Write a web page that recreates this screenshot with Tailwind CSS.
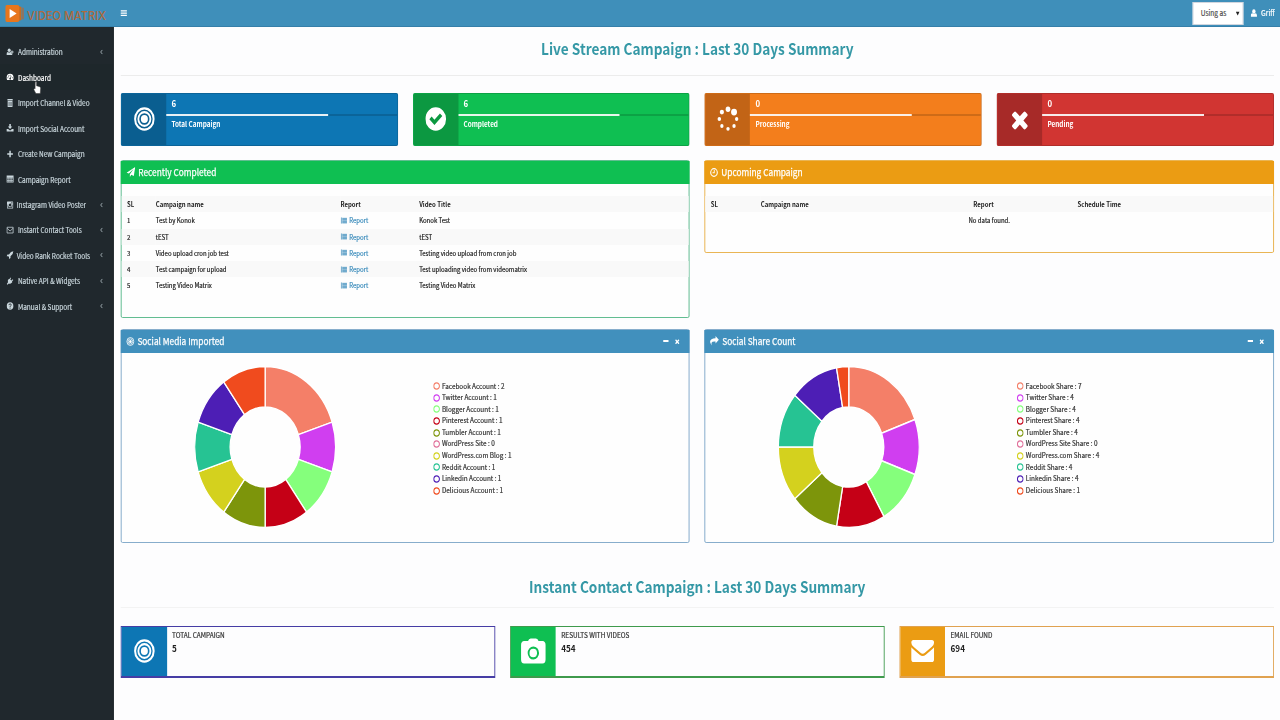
<!DOCTYPE html>
<html lang="en">
<head>
    <meta charset="UTF-8">
    <meta name="viewport" content="width=device-width, initial-scale=1.0">
    <title>Video Matrix | Dashboard</title>
    <script src="https://cdn.jsdelivr.net/npm/@tailwindcss/browser@4"></script>
</head>
<body class="bg-[#fdfdfe] overflow-hidden font-['Noto_Sans_CJK_SC','Noto_Sans',sans-serif] text-[#333]">

<!-- Icons -->
<svg class="hidden">
    <symbol id="i-user-plus" viewBox="0 0 16 16"><circle cx="6" cy="4.5" r="3.5"/><path d="M0 14v-2.500q0-3.500 3-3.500q3 2 6 0q1.200 0 1.800.8v2.200h2.200v3z"/><path d="M11.500 5h2v2.200H16v2h-2.500v2.300h-2V9.200H9.300v-2h2.200z"/></symbol>
    <symbol id="i-dashboard" viewBox="0 0 16 16"><path fill-rule="evenodd" d="M8 1.500a8 8 0 0 1 8 8q0 2.500-1.300 4.500H1.300Q0 12 0 9.500a8 8 0 0 1 8-8zM3 8.500a1.100 1.100 0 1 0 .1 2.200A1.100 1.100 0 0 0 3 8.500zM4.500 4.900a1.100 1.100 0 1 0 .1 2.200 1.100 1.100 0 0 0-.1-2.200zM8 3.300a1.100 1.100 0 1 0 .1 2.200A1.100 1.100 0 0 0 8 3.300zM13 8.500a1.100 1.100 0 1 0 .1 2.200 1.100 1.100 0 0 0-.1-2.200zM10.200 5.500L8.300 9.500a1.800 1.800 0 1 0 1 .4l1.900-4z"/></symbol>
    <symbol id="i-trash" viewBox="0 0 16 16"><path fill-rule="evenodd" d="M2 0h12v3H2zM2.500 4h11v12h-11zM5 6v8h1V6zm2.500 0v8h1V6zM10 6v8h1V6z"/></symbol>
    <symbol id="i-download" viewBox="0 0 16 16"><path d="M6.200 0h3.600v5H13l-5 5-5-5h3.200z"/><path d="M0 10h3.500L8 13l4.500-3H16v5H0z"/></symbol>
    <symbol id="i-plus" viewBox="0 0 16 16"><path d="M6.300 1.500h3.400v4.800h4.800v3.400H9.700v4.800H6.300V9.700H1.500V6.300h4.800z"/></symbol>
    <symbol id="i-table" viewBox="0 0 16 16"><path fill-rule="evenodd" d="M0 1h16v14H0zM1.500 5.500v1.700h3.200V5.500zm4.500 0v1.700h3.500V5.500zm5 0v1.700h3.500V5.500zM1.500 8.400v1.600h3.200V8.400zm4.500 0v1.600h3.500V8.400zm5 0v1.600h3.500V8.400zM1.500 11.500v1.700h3.200v-1.700zm4.500 0v1.700h3.500v-1.700zm5 0v1.700h3.500v-1.700z"/></symbol>
    <symbol id="i-instagram" viewBox="0 0 16 16"><path fill-rule="evenodd" d="M2 1h12q1 0 1 1v12q0 1-1 1H2q-1 0-1-1V2q0-1 1-1zm9 1.500v2.500h2.500V2.500zM2.500 7v6.500h11V7h-1.300a4.300 4.300 0 1 1-8.400 0zM8 5a3 3 0 1 0 .1 6A3 3 0 0 0 8 5z"/></symbol>
    <symbol id="i-envelope-o" viewBox="0 0 16 16"><path d="M1 2.500h14v11.500H1zM1 4.500l7 5.500 7-5.500" fill="none" stroke="currentColor" stroke-width="1.600"/></symbol>
    <symbol id="i-rocket" viewBox="0 0 16 16"><path d="M15.500.5q0 6-6.500 10v3.500l-3.500 2V12L4 10.500H.2L2 7h3.500q4-6.500 10-6.500z"/></symbol>
    <symbol id="i-plug" viewBox="0 0 16 16"><path d="M9 1l1.500 1-2 3 2.500 2 3-2.500 1.300 1.300-3 3 1 1-1.500 1.500q-3 3.500-6.500 1.500L2 15.500.5 14l2.800-3.300Q1.500 7 5 4l1.300-.7.700.8z"/></symbol>
    <symbol id="i-question" viewBox="0 0 16 16"><circle cx="8" cy="8" r="7.500"/><path d="M5.500 6.200q.2-2.500 2.600-2.500t2.500 2.200q0 1.500-1.500 2.200Q8 8.700 8 9.800M8 11.200v2" fill="none" stroke="#20282d" stroke-width="1.900"/></symbol>
    <symbol id="i-angle" viewBox="0 0 16 16"><path d="M10.500 2.500L5.500 8l5 5.500" fill="none" stroke="currentColor" stroke-width="2"/></symbol>
    <symbol id="i-bars" viewBox="0 0 16 16"><path d="M1 2.500h14v2.500H1zm0 4.500h14v2.500H1zm0 4.500h14V14H1z"/></symbol>
    <symbol id="i-user" viewBox="0 0 16 16"><ellipse cx="8" cy="5" rx="3.900" ry="4.700"/><path d="M1 15.500v-3Q1 8.500 4.700 8.500q3.300 2 6.600 0Q15 8.500 15 12.500v3z"/></symbol>
    <symbol id="i-bullseye" viewBox="0 0 24 24"><circle cx="12" cy="12" r="10.600" fill="none" stroke="currentColor" stroke-width="2.300"/><circle cx="12" cy="12" r="6.900" fill="none" stroke="currentColor" stroke-width="2.100"/><circle cx="12" cy="12" r="4"/></symbol>
    <symbol id="i-check" viewBox="0 0 24 24"><path fill-rule="evenodd" d="M12 .2a11.800 11.800 0 1 1 0 23.600A11.800 11.800 0 0 1 12 .2zM4.700 12.200l5.800 5.800 9-9L16.800 6.500l-6.300 6.200-3.200-3.100z"/></symbol>
    <symbol id="i-spinner" viewBox="0 0 26 26"><circle cx="13" cy="3.300" r="2.700"/><circle cx="19.900" cy="6.100" r="3.400"/><circle cx="22.900" cy="13" r="1.900"/><circle cx="19.900" cy="20" r="1.900"/><circle cx="13" cy="22.800" r="1.900"/><circle cx="6" cy="20" r="1.900"/><circle cx="3.100" cy="13" r="2"/><circle cx="6" cy="6.100" r="2.400"/></symbol>
    <symbol id="i-times" viewBox="0 0 1792 1792"><path d="M1490 1322q0 40-28 68l-136 136q-28 28-68 28t-68-28l-294-294-294 294q-28 28-68 28t-68-28l-136-136q-28-28-28-68t28-68l294-294-294-294q-28-28-28-68t28-68l136-136q28-28 68-28t68 28l294 294 294-294q28-28 68-28t68 28l136 136q28 28 28 68t-28 68l-294 294 294 294q28 28 28 68z"/></symbol>
    <symbol id="i-plane" viewBox="0 0 16 16"><path d="M16 0l-2.500 14.500-4.700-2L6.300 16v-4.500L13 3.300 4.500 10.500.3 9z"/></symbol>
    <symbol id="i-clock" viewBox="0 0 16 16"><circle cx="8" cy="8" r="6.700" fill="none" stroke="currentColor" stroke-width="2.200"/><path d="M8.500 3.500v5H5" fill="none" stroke="currentColor" stroke-width="1.800"/></symbol>
    <symbol id="i-share" viewBox="0 0 16 16"><path d="M10 0l6 6-6 6V8.700q-6-.5-7.300 2-.4 1.800.6 4.300Q0 11.500 0 9.300q.5-5.700 10-5.700z"/></symbol>
    <symbol id="i-list" viewBox="0 0 16 16"><path fill-opacity=".55" d="M0 1h3v14H0z"/><path d="M4 2h12v2H4zm0 3.300h12v2H4zm0 3.400h12v2H4zM4 12h12v2H4z" fill-opacity=".85"/><path d="M0 1h16v14H0z" fill-opacity=".25"/></symbol>
    <symbol id="i-camera" viewBox="0 0 28 26"><path fill-rule="evenodd" d="M8 3q.8-2.500 3-2.500h6q2.200 0 3 2.500h4.500Q28 3.300 28 7v14.500q0 4-3.500 4h-21q-3.500 0-3.500-4V7q0-3.700 3.500-4zm6 5.500a6.500 6.500 0 1 0 .1 13 6.500 6.500 0 0 0-.1-13zm0 2.200a4.300 4.300 0 1 1-.1 8.600 4.300 4.300 0 0 1 .1-8.600z"/></symbol>
    <symbol id="i-envelope" viewBox="0 0 26 22"><path d="M2.500 0h21Q26 0 26 2.800q0 2-2.500 4l-8 6q-2.500 1.900-5 0l-8-6Q0 4.800 0 2.800 0 0 2.500 0z"/><path d="M0 7.200q1 1.300 9.500 7.500 3.500 2.500 7 0Q25 8.500 26 7.200v12Q26 22 23.500 22h-21Q0 22 0 19.200z"/></symbol>
</svg>

<!-- The whole UI is laid out at 1463px and squeezed to the 1280px window -->
<div class="w-[1280px] h-[720px] overflow-hidden">
<div class="w-[1462.8px] h-[720px] origin-top-left scale-x-[0.875] flex flex-col relative">

    <!-- Top bar -->
    <header class="h-[27px] shrink-0 bg-[#3f8fba] flex items-center border-b border-[#367fa9]">
        <div class="w-[130px] h-full flex items-center pl-[6px]">
            <svg class="w-[117px] h-[22px]" viewBox="0 0 117 22">
                <path d="M15 4l3.500 1v13L15 19z" fill="#c96c1f"/>
                <path d="M19.500 5.500l1.500.5v11l-1.500.5z" fill="#b5683a"/>
                <rect x="0" y="3" width="16" height="17" rx="2" fill="#e8761c"/>
                <path d="M5 7l8 4.500-8 4.500z" fill="#fff"/>
                <text x="25" y="18" textLength="90" lengthAdjust="spacingAndGlyphs" font-family="Inter, sans-serif" font-size="12" font-weight="500" fill="#b06a3c">VIDEO MATRIX</text>
            </svg>
        </div>
        <svg class="w-[9px] h-[8px] ml-[7px] fill-white"><use href="#i-bars"/></svg>
        <div class="ml-auto flex items-center h-full">
            <div class="w-[58px] h-[23px] bg-white border border-[#d2d6de] flex items-center pl-[8px] text-[7.5px] text-[#444] [-webkit-text-stroke:0.15px]">Using as
                <svg class="w-[5px] h-[5px] ml-auto mr-[3px] fill-[#222]" viewBox="0 0 6 6"><path d="M.5 1h5L3 5.500z"/></svg>
            </div>
            <svg class="w-[8px] h-[8px] ml-[7.500px] fill-white"><use href="#i-user"/></svg>
            <span class="ml-[4.5px] mr-[6px] text-[7.8px] text-white [-webkit-text-stroke:0.2px]">Griff</span>
        </div>
    </header>

    <div class="flex flex-1 min-h-0">
        <!-- Sidebar -->
        <aside class="w-[130px] bg-[#20282d] border-r border-[#1a2226] pt-[12px]">
            <nav id="menu" class="flex flex-col"></nav>
        </aside>

        <!-- Content -->
        <main class="flex-1 pl-[8px] pr-[7px] flex flex-col">
            <h1 class="h-[49px] border-b border-[#ececec] text-center text-[15.6px] leading-[42px] font-bold text-[#3598a6]">Live Stream Campaign : Last 30 Days Summary</h1>

            <section id="stats" class="grid grid-cols-4 gap-[17px] mt-[17px]"></section>

            <div class="grid grid-cols-2 items-start gap-[17px] mt-[14.5px]">
                <section class="h-[158px] border border-[#57b98a] rounded-[2px] bg-[#fefefe]">
                    <h2 class="h-[23px] pb-[1px] -mx-px bg-[#0fbf52] text-white text-[9.5px] flex items-center gap-[3px] pl-[6px] [-webkit-text-stroke:0.25px]"><svg class="w-[11px] h-[10px] fill-white"><use href="#i-plane"/></svg>Recently Completed</h2>
                    <table class="w-full mt-[12px] table-fixed text-[6.88px] leading-[16.25px] text-[#222]">
                        <thead>
                            <tr class="bg-[#f9f9f9] text-left"><th class="w-[39px] pl-[6px]">SL</th><th class="w-[211px]">Campaign name</th><th class="w-[90px]">Report</th><th>Video Title</th></tr>
                        </thead>
                        <tbody id="completed" class="[-webkit-text-stroke:0.2px]"></tbody>
                    </table>
                </section>

                <section class="h-[93px] border border-[#e8b04a] rounded-[2px] bg-[#fefefe]">
                    <h2 class="h-[23px] pb-[1px] -mx-px bg-[#eb9c13] text-white text-[9.5px] flex items-center gap-[3px] pl-[6px] [-webkit-text-stroke:0.25px]"><svg class="w-[10px] h-[9px] fill-white text-white"><use href="#i-clock"/></svg>Upcoming Campaign</h2>
                    <table class="w-full mt-[12px] table-fixed text-[6.88px] leading-[16.25px] text-[#222]">
                        <tr class="bg-[#f9f9f9] text-left"><th class="w-[63px] pl-[6px]">SL</th><th class="w-[243px]">Campaign name</th><th class="w-[119px]">Report</th><th>Schedule Time</th></tr>
                        <tr><td colspan="4" class="text-center [-webkit-text-stroke:0.2px]">No data found.</td></tr>
                    </table>
                </section>
            </div>

            <div class="grid grid-cols-2 gap-[17px] mt-[11px]">
                <section class="h-[214px] border border-[#7fa8c9] rounded-[2px] bg-[#fefefe]">
                    <h2 class="h-[23px] pb-[1px] -mx-px bg-[#4190bd] text-white text-[9.5px] flex items-center gap-[3px] pl-[6px] pr-[10px] [-webkit-text-stroke:0.25px]"><svg class="w-[10px] h-[9px] fill-white text-white"><use href="#i-bullseye"/></svg>Social Media Imported
                        <span class="ml-auto w-[6px] h-[1.5px] bg-white"></span><svg class="w-[8px] h-[7px] ml-[3px] fill-white"><use href="#i-times"/></svg>
                    </h2>
                    <div class="flex pt-[12.5px] pl-[82.5px]">
                        <svg id="chart-account" class="w-[162px] h-[162px]" viewBox="-81 -81 162 162"></svg>
                        <ul id="legend-account" class="ml-[111px] mt-[15px] text-[7.32px] leading-[11.6px] [-webkit-text-stroke:0.2px]"></ul>
                    </div>
                </section>
                <section class="h-[214px] border border-[#7fa8c9] rounded-[2px] bg-[#fefefe]">
                    <h2 class="h-[23px] pb-[1px] -mx-px bg-[#4190bd] text-white text-[9.5px] flex items-center gap-[3px] pl-[6px] pr-[10px] [-webkit-text-stroke:0.25px]"><svg class="w-[11px] h-[10px] fill-white"><use href="#i-share"/></svg>Social Share Count
                        <span class="ml-auto w-[6px] h-[1.5px] bg-white"></span><svg class="w-[8px] h-[7px] ml-[3px] fill-white"><use href="#i-times"/></svg>
                    </h2>
                    <div class="flex pt-[12.5px] pl-[82.5px]">
                        <svg id="chart-share" class="w-[162px] h-[162px]" viewBox="-81 -81 162 162"></svg>
                        <ul id="legend-share" class="ml-[111px] mt-[15px] text-[7.32px] leading-[11.6px] [-webkit-text-stroke:0.2px]"></ul>
                    </div>
                </section>
            </div>

            <h1 class="mt-[23px] h-[42px] border-b border-[#f3f3f3] text-center text-[15.6px] leading-[40px] font-bold text-[#3598a6]">Instant Contact Campaign : Last 30 Days Summary</h1>

            <section class="grid grid-cols-3 gap-[17px] mt-[17.5px]">
                <div class="h-[52.5px] flex border border-b-2 border-[#463da5]">
                    <div class="w-[51.5px] bg-[#0d76b4] flex items-center justify-center"><svg class="w-[24px] h-[24px] fill-white text-white"><use href="#i-bullseye"/></svg></div>
                    <div class="pl-[6px] pt-[2px]"><p class="text-[7.4px] leading-[12.5px] [-webkit-text-stroke:0.2px]">TOTAL CAMPAIGN</p><p class="text-[9.3px] leading-[14px] font-bold text-[#222]">5</p></div>
                </div>
                <div class="h-[52.5px] flex border border-b-2 border-[#3f9a4c]">
                    <div class="w-[51.5px] bg-[#0fbf52] flex items-center justify-center"><svg class="w-[29px] h-[26px] fill-white"><use href="#i-camera"/></svg></div>
                    <div class="pl-[6px] pt-[2px]"><p class="text-[7.4px] leading-[12.5px] [-webkit-text-stroke:0.2px]">RESULTS WITH VIDEOS</p><p class="text-[9.3px] leading-[14px] font-bold text-[#222]">454</p></div>
                </div>
                <div class="h-[52.5px] flex border border-b-2 border-[#e0a250]">
                    <div class="w-[51.5px] bg-[#eb9c13] flex items-center justify-center"><svg class="w-[27px] h-[22px] fill-white"><use href="#i-envelope"/></svg></div>
                    <div class="pl-[6px] pt-[2px]"><p class="text-[7.4px] leading-[12.5px] [-webkit-text-stroke:0.2px]">EMAIL FOUND</p><p class="text-[9.3px] leading-[14px] font-bold text-[#222]">694</p></div>
                </div>
            </section>
        </main>
    </div>

    <!-- Mouse pointer -->
    <svg class="absolute left-[38px] top-[80.5px] w-[9px] h-[13px]" viewBox="0 0 9 13"><path d="M2.300.8q1.200-.6 1.500.4v3.600l3.500.9q1.200.4 1.100 1.700L8 12.500H3L.6 8.500q0-1.400 1.500-.6z" fill="#fff" stroke="#333" stroke-width=".5"/></svg>
</div>
</div>

<script>
    // Sidebar menu: [icon, label, has submenu]
    const menu = [
        ['user-plus', 'Administration', 1],
        ['dashboard', 'Dashboard', 0],
        ['trash', 'Import Channel &amp; Video', 0],
        ['download', 'Import Social Account', 0],
        ['plus', 'Create New Campaign', 0],
        ['table', 'Campaign Report', 0],
        ['instagram', 'Instagram Video Poster', 1],
        ['envelope-o', 'Instant Contact Tools', 1],
        ['rocket', 'Video Rank Rocket Tools', 1],
        ['plug', 'Native API &amp; Widgets', 1],
        ['question', 'Manual &amp; Support', 1]
    ];
    document.getElementById('menu').innerHTML = menu.map(([icon, label, sub], i) => `
        <a class="h-[25.48px] flex items-center pl-[7px] pr-[10px] text-[7.42px] whitespace-nowrap [-webkit-text-stroke:0.2px] ${i === 1 ? 'bg-[#1e272b] text-white' : 'text-[#c9d6dc]'}">
            <svg class="w-[9px] h-[8px] shrink-0 fill-current ${i === 6 || i === 8 ? 'mr-[3px]' : 'mr-[4.5px]'}"><use href="#i-${icon}"/></svg>${label}
            ${sub ? '<svg class="w-[6px] h-[6px] ml-auto"><use href="#i-angle"/></svg>' : ''}
        </a>`).join('');

    // Campaign counters
    const stats = [
        ['bullseye', 6, 'Total Campaign', 'bg-[#0d76b4]', 'w-[24px] h-[24px]'],
        ['check', 6, 'Completed', 'bg-[#0fbf52]', 'w-[24px] h-[24px]'],
        ['spinner', 0, 'Processing', 'bg-[#f37e1c]', 'w-[26px] h-[26px]'],
        ['times', 0, 'Pending', 'bg-[#d13532]', 'w-[27px] h-[27px]']
    ];
    document.getElementById('stats').innerHTML = stats.map(([icon, n, label, bg, size]) => `
        <div class="h-[52.5px] flex rounded-[2px] overflow-hidden border border-black/15 text-white ${bg}">
            <div class="w-[51px] bg-black/20 flex items-center justify-center"><svg class="fill-white ${size}"><use href="#i-${icon}"/></svg></div>
            <div class="flex-1">
                <p class="h-[20px] pl-[6px] text-[9px] leading-[20px] font-bold">${n}</p>
                <div class="h-[2px] bg-black/15"><div class="h-full w-[70%] bg-white/90"></div></div>
                <p class="pl-[6px] text-[7.3px] leading-[16px] font-bold">${label}</p>
            </div>
        </div>`).join('');

    // Recently completed rows
    const completed = [
        ['Test by Konok', 'Konok Test'],
        ['tEST', 'tEST'],
        ['Video upload cron job test', 'Testing video upload from cron job'],
        ['Test campaign for upload', 'Test uploading video from videomatrix'],
        ['Testing Video Matrix', 'Testing Video Matrix']
    ];
    document.getElementById('completed').innerHTML = completed.map(([name, title], i) => `
        <tr class="${i % 2 ? 'bg-[#f9f9f9]' : ''}"><td class="pl-[6px]">${i + 1}</td><td>${name}</td>
        <td class="text-[#3c8dbc]"><svg class="inline w-[8px] h-[7px] mr-[2px] -mt-[2px] fill-current"><use href="#i-list"/></svg>Report</td><td>${title}</td></tr>`).join('');

    // Doughnut charts with legends
    const colors = ['#f47f68', '#d03ef0', '#85ff7c', '#c50016', '#7d950b', '#e0709a', '#d4d11e', '#26c393', '#4d1eb5', '#f04b1e'];

    function drawChart(key, labels, values) {
        const total = values.reduce((a, b) => a + b, 0);
        const at = (r, t) => (r * Math.sin(t)).toFixed(2) + ' ' + (-r * Math.cos(t)).toFixed(2);
        let angle = 0, paths = '';
        values.forEach((v, i) => {
            if (!v) return;
            const end = angle + v / total * Math.PI * 2;
            paths += `<path d="M${at(80.5, angle)}A80.5 80.5 0 0 1 ${at(80.5, end)}L${at(40, end)}A40 40 0 0 0 ${at(40, angle)}z" fill="${colors[i]}" stroke="#fff" stroke-width="1.5"/>`;
            angle = end;
        });
        document.getElementById('chart-' + key).innerHTML = paths;
        document.getElementById('legend-' + key).innerHTML = labels.map((l, i) =>
            `<li class="flex items-center gap-[2.5px]"><svg class="w-[8px] h-[8px]" viewBox="0 0 8 8"><circle cx="4" cy="4" r="3.2" fill="none" stroke="${colors[i]}" stroke-width="1.2"/></svg>${l} : ${values[i]}</li>`).join('');
    }

    drawChart('account',
        ['Facebook Account', 'Twitter Account', 'Blogger Account', 'Pinterest Account', 'Tumbler Account', 'WordPress Site', 'WordPress.com Blog', 'Reddit Account', 'Linkedin Account', 'Delicious Account'],
        [2, 1, 1, 1, 1, 0, 1, 1, 1, 1]);
    drawChart('share',
        ['Facebook Share', 'Twitter Share', 'Blogger Share', 'Pinterest Share', 'Tumbler Share', 'WordPress Site Share', 'WordPress.com Share', 'Reddit Share', 'Linkedin Share', 'Delicious Share'],
        [7, 4, 4, 4, 4, 0, 4, 4, 4, 1]);
</script>
</body>
</html>
